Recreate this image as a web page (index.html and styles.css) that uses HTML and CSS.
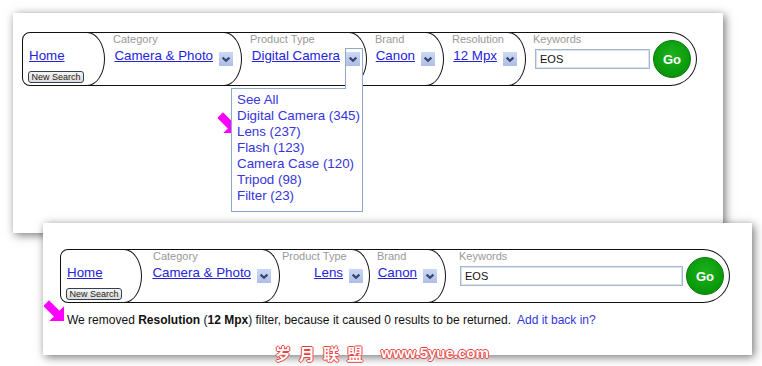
FILE: index.html
```html
<!DOCTYPE html>
<html>
<head>
<meta charset="utf-8">
<title>Search filters</title>
<link rel="stylesheet" href="styles.css">
</head>
<body>
<div class="panel panel-top">
  <div class="bar">
    <div class="seg seg-home">
      <a class="link" href="#">Home</a>
      <button class="newsearch" type="button">New Search</button>
    </div>
    <div class="seg w-cat1">
      <div class="label">Category</div>
      <div class="row"><a class="link" href="#">Camera &amp; Photo</a><span class="drop"><svg viewBox="0 0 14 14"><path d="M3.6 5.6 L7 8.8 L10.4 5.6"/></svg></span></div>
    </div>
    <div class="seg seg-prod w-prod1">
      <div class="label">Product Type</div>
      <div class="row"><a class="link" href="#">Digital Camera</a><span class="drop"><svg viewBox="0 0 14 14"><path d="M3.6 5.6 L7 8.8 L10.4 5.6"/></svg></span></div>
      <div class="open-frame"></div>
      <ul class="menu">
        <li>See All</li>
        <li>Digital Camera (345)</li>
        <li>Lens (237)</li>
        <li>Flash (123)</li>
        <li>Camera Case (120)</li>
        <li>Tripod (98)</li>
        <li>Filter (23)</li>
      </ul>
    </div>
    <div class="seg w-brand1">
      <div class="label">Brand</div>
      <div class="row"><a class="link" href="#">Canon</a><span class="drop"><svg viewBox="0 0 14 14"><path d="M3.6 5.6 L7 8.8 L10.4 5.6"/></svg></span></div>
    </div>
    <div class="seg w-res1">
      <div class="label">Resolution</div>
      <div class="row"><a class="link" href="#">12 Mpx</a><span class="drop"><svg viewBox="0 0 14 14"><path d="M3.6 5.6 L7 8.8 L10.4 5.6"/></svg></span></div>
    </div>
    <div class="seg seg-kw w-kw1">
      <div class="kw-col">
        <div class="label">Keywords</div>
        <input class="kw-input" type="text" value="EOS">
      </div>
      <button class="go" type="button">Go</button>
    </div>
  </div>
  <svg class="pointer pointer-top" viewBox="-1 -1 22 22"><polygon points="20,20 20,4.5 15.2,9.3 4.2,-1.7 -1.7,4.2 9.3,15.2 4.5,20"/></svg>
</div>

<div class="panel panel-bottom">
  <div class="bar">
    <div class="seg seg-home">
      <a class="link" href="#">Home</a>
      <button class="newsearch" type="button">New Search</button>
    </div>
    <div class="seg w-cat2">
      <div class="label">Category</div>
      <div class="row"><a class="link" href="#">Camera &amp; Photo</a><span class="drop"><svg viewBox="0 0 14 14"><path d="M3.6 5.6 L7 8.8 L10.4 5.6"/></svg></span></div>
    </div>
    <div class="seg seg-prod w-prod2">
      <div class="label">Product Type</div>
      <div class="row"><a class="link" href="#">Lens</a><span class="drop"><svg viewBox="0 0 14 14"><path d="M3.6 5.6 L7 8.8 L10.4 5.6"/></svg></span></div>
    </div>
    <div class="seg w-brand2">
      <div class="label">Brand</div>
      <div class="row"><a class="link" href="#">Canon</a><span class="drop"><svg viewBox="0 0 14 14"><path d="M3.6 5.6 L7 8.8 L10.4 5.6"/></svg></span></div>
    </div>
    <div class="seg seg-kw w-kw2">
      <div class="kw-col">
        <div class="label">Keywords</div>
        <input class="kw-input" type="text" value="EOS">
      </div>
      <button class="go" type="button">Go</button>
    </div>
  </div>
  <p class="msg">We removed <b>Resolution</b> (<b>12 Mpx</b>) filter, because it caused 0 results to be returned.&nbsp; <a href="#">Add it back in?</a></p>
  <svg class="pointer pointer-bottom" viewBox="-1 -1 22 22"><polygon points="20,20 20,4.5 15.2,9.3 4.2,-1.7 -1.7,4.2 9.3,15.2 4.5,20"/></svg>
</div>

<div class="watermark"><span class="wm-cn">岁月联盟</span><span class="wm-en">www.5yue.com</span></div>
</body>
</html>
```

FILE: styles.css
```css
* { box-sizing: border-box; }

body {
  margin: 0;
  width: 762px;
  height: 366px;
  overflow: hidden;
  position: relative;
  background: #fff;
  font-family: "Liberation Sans", Arial, sans-serif;
  color: #111;
}

.panel {
  position: relative;
  z-index: 0;
  background: #fff;
  box-shadow: 2px 2px 9px rgba(0, 0, 0, 0.55);
}

.panel-top {
  margin: 13px 0 0 13px;
  width: 710px;
  height: 220px;
  padding: 19px 0 0 9px;
}

.panel-bottom {
  margin: -10px 0 0 43px;
  width: 709px;
  height: 132px;
  padding: 26px 0 0 17px;
}

.bar {
  display: flex;
  height: 54px;
}

.seg {
  position: relative;
  flex: none;
  height: 54px;
  display: flex;
  flex-direction: column;
  border: 1px solid #111;
  border-left: 0;
  border-radius: 0 18px 18px 0 / 0 27px 27px 0;
  margin-left: -18px;
  padding: 0 8px 0 26px;
}

.seg-home {
  margin-left: 0;
  border-left: 1px solid #111;
  border-radius: 8px 18px 18px 8px / 8px 27px 27px 8px;
  padding: 15px 0 0 6px;
  align-items: flex-start;
}

.w-cat1 { width: 155px; }
.w-prod1 { width: 143px; }
.w-brand1 { width: 95px; }
.w-res1 { width: 100px; }
.w-kw1 { width: 189px; }

.panel-bottom .seg-home { width: 82px; }
.panel-top .seg-home { width: 83px; }
.w-cat2 { width: 156px; padding-left: 29px; }
.w-prod2 { width: 108px; padding-left: 20px; }
.w-brand2 { width: 94px; padding-left: 25px; }
.w-kw2 { width: 302px; padding-left: 31px; }

.seg-prod { padding-right: 6px; }

.label {
  font-size: 11px;
  line-height: 12px;
  color: #999;
  white-space: nowrap;
}

.link {
  font-size: 13.33px;
  line-height: 16px;
  color: #2323dc;
  text-decoration: underline;
  white-space: nowrap;
}

.row {
  display: flex;
  justify-content: flex-end;
  align-items: flex-end;
  gap: 6px;
  margin-top: 3px;
  height: 16px;
}

.drop {
  position: relative;
  z-index: 3;
  flex: none;
  width: 14px;
  height: 14px;
  margin-bottom: -2px;
  background: linear-gradient(#cdd8f6, #aebde9);
}

.drop svg {
  display: block;
  width: 14px;
  height: 14px;
  fill: none;
  stroke: #3a4868;
  stroke-width: 2.2;
}

.newsearch {
  margin: 7px 0 0 -1px;
  width: 56px;
  height: 12px;
  padding: 0;
  font-family: "Liberation Sans", Arial, sans-serif;
  font-size: 9px;
  line-height: 10px;
  color: #222;
  background: linear-gradient(#f6f5f2, #dedcd6);
  border: 1px solid #30405c;
  border-radius: 3px;
}

.open-frame {
  position: absolute;
  left: 121px;
  top: 15px;
  width: 18px;
  height: 41px;
  z-index: 2;
  background: #fff;
  border: 1px solid #8eaacb;
  border-bottom: 0;
}

.menu {
  position: absolute;
  left: 7px;
  top: 55px;
  width: 132px;
  height: 124px;
  z-index: 1;
  margin: 0;
  padding: 3px 0 0 5px;
  list-style: none;
  background: #fff;
  border: 1px solid #8eaacb;
  font-size: 13.33px;
  line-height: 16px;
  color: #3535dc;
  white-space: nowrap;
}

.seg-kw {
  flex-direction: row;
  align-items: center;
  border-radius: 0 27px 27px 0 / 0 27px 27px 0;
  padding-right: 5px;
}

.w-kw1 { padding-left: 25px; }

.kw-col {
  flex: 1;
  min-width: 0;
  align-self: flex-start;
  display: flex;
  flex-direction: column;
}

.kw-input {
  min-width: 0;
  width: auto;
  margin: 4px 0 0 2px;
  height: 20px;
  padding: 0 0 0 4px;
  border: 1px solid #a3b8d0;
  box-shadow: inset 0 0 0 1px #d8e3ee;
  font-family: "Liberation Sans", Arial, sans-serif;
  font-size: 11px;
  color: #111;
  background: #fff;
  outline: none;
}

.w-kw2 .kw-input { margin-left: 1px; }

.go {
  flex: none;
  width: 38px;
  height: 38px;
  margin-left: 3px;
  padding: 0;
  border: 1px solid #067a06;
  border-radius: 50%;
  background: radial-gradient(circle at 50% 40%, #1fb21f 0%, #0a9c0a 60%, #078407 100%);
  color: #fff;
  font-family: "Liberation Sans", Arial, sans-serif;
  font-weight: bold;
  font-size: 13px;
}

.msg {
  margin: 10px 0 0 7px;
  font-size: 12px;
  line-height: 14px;
  color: #111;
  white-space: nowrap;
}

.msg a {
  color: #3333dd;
  text-decoration: none;
}

.pointer {
  position: absolute;
  width: 21px;
  height: 23px;
  fill: #ff00ff;
}

.pointer-top { left: 205px; top: 99px; }
.pointer-bottom { left: 1px; top: 77px; }

.watermark {
  position: absolute;
  left: 275px;
  top: 344px;
  z-index: 5;
  display: flex;
  align-items: center;
  line-height: 18px;
  color: #fff;
  text-shadow: 1px 0 0 #ec4040, -1px 0 0 #ec4040, 0 1px 0 #ec4040, 0 -1px 0 #ec4040;
}

.wm-cn {
  font-family: "Noto Sans CJK SC", sans-serif;
  font-weight: bold;
  font-size: 16px;
  letter-spacing: 8px;
}

.wm-en {
  margin-left: 10px;
  font-family: "Liberation Sans", Arial, sans-serif;
  font-weight: bold;
  font-size: 15px;
}
```
